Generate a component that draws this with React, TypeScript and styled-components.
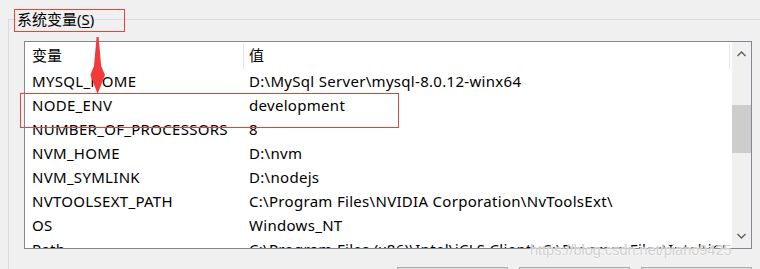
import React from "react";
import styled, { createGlobalStyle } from "styled-components";

const GlobalStyle = createGlobalStyle`
  html, body {
    margin: 0;
    padding: 0;
    background: #f0f0f0;
  }
  body {
    font-family: "Noto Sans", "Noto Sans CJK SC", sans-serif;
    color: #000;
  }
`;

const variables = [
  { name: "MYSQL_HOME", value: "D:\\MySql Server\\mysql-8.0.12-winx64" },
  { name: "NODE_ENV", value: "development" },
  { name: "NUMBER_OF_PROCESSORS", value: "8" },
  { name: "NVM_HOME", value: "D:\\nvm" },
  { name: "NVM_SYMLINK", value: "D:\\nodejs" },
  { name: "NVTOOLSEXT_PATH", value: "C:\\Program Files\\NVIDIA Corporation\\NvToolsExt\\" },
  { name: "OS", value: "Windows_NT" },
  {
    name: "Path",
    value:
      "C:\\Program Files (x86)\\Intel\\iCLS Client\\;C:\\Program Files\\Intel\\iCLS Client\\;C:\\Windows\\system32"
  }
];

const Page = styled.div`
  position: relative;
  width: 760px;
  height: 269px;
  overflow: hidden;
  padding: 8px 0 0 8px;
  box-sizing: border-box;
`;

const GroupBox = styled.fieldset`
  margin: 0;
  padding: 11px 0 0 15px;
  border: 1px solid #dcdcdc;
  border-right: none;
  border-bottom: none;
  min-width: 0;
`;

const Legend = styled.legend`
  margin-left: -8px;
  padding: 0 1px;
  font-size: 15px;
  line-height: 22px;
`;

const Mnemonic = styled.span`
  text-decoration: underline;
  text-underline-offset: 2px;
`;

const ListView = styled.div`
  width: 728px;
  height: 208px;
  box-sizing: border-box;
  border: 1px solid #828790;
  background: #fff;
  display: flex;
  overflow: hidden;
`;

const Table = styled.div`
  flex: 1;
  overflow: hidden;
  font-size: 15px;
  letter-spacing: 0.3px;
`;

const HeaderRow = styled.div`
  display: grid;
  grid-template-columns: 219px 486px;
  height: 27px;
`;

const HeaderCell = styled.div<{ $pad: number }>`
  padding-left: ${({ $pad }) => $pad}px;
  margin-top: 1px;
  border-right: 1px solid #e5e5e5;
  line-height: 25px;
  letter-spacing: 0;
`;

const Row = styled.div`
  display: grid;
  grid-template-columns: 219px 486px;
  height: 24px;
  line-height: 24px;
  white-space: nowrap;
`;

const Cell = styled.div<{ $pad: number }>`
  padding-left: ${({ $pad }) => $pad}px;
  overflow: hidden;
`;

const ScrollBar = styled.div`
  width: 19px;
  background: #f0f0f0;
  display: flex;
  flex-direction: column;
`;

const ArrowButton = styled.div`
  height: 24px;
  display: flex;
  align-items: center;
  justify-content: center;
  color: #606060;
`;

const Track = styled.div`
  flex: 1;
`;

const Thumb = styled.div`
  background: #cdcdcd;
`;

const ButtonRow = styled.div`
  width: 728px;
  display: flex;
  justify-content: flex-end;
  gap: 11px;
  margin-top: 18px;
`;

const DialogButton = styled.div`
  width: 111px;
  height: 23px;
  box-sizing: border-box;
  border: 1px solid #adadad;
  background: #e1e1e1;
`;

const RedBox = styled.div`
  position: absolute;
  box-sizing: border-box;
  border: 1px solid #e8413f;
`;

const LegendMark = styled(RedBox)`
  left: 14px;
  top: 9px;
  width: 111px;
  height: 23px;
`;

const RowMark = styled(RedBox)`
  left: 20px;
  top: 93px;
  width: 379px;
  height: 35px;
`;

const Arrow = styled.svg`
  position: absolute;
  left: 88px;
  top: 36px;
`;

const Watermark = styled.div`
  position: absolute;
  left: 530px;
  top: 242px;
  font-family: "Liberation Sans", Arial, sans-serif;
  font-size: 14.5px;
  color: rgba(190, 190, 190, 0.75);
  text-shadow: 0 0 2px #fff, 0 0 1px #fff;
  white-space: nowrap;
`;

const Chevron: React.FC<{ up?: boolean }> = ({ up }) => (
  <svg width="9" height="6" viewBox="0 0 9 6">
    <path
      d={up ? "M0.5 5 L4.5 1 L8.5 5" : "M0.5 1 L4.5 5 L8.5 1"}
      fill="none"
      stroke="currentColor"
      strokeWidth="1.4"
    />
  </svg>
);

const App: React.FC = () => (
  <>
    <GlobalStyle />
    <Page>
      <GroupBox>
        <Legend>
          系统变量(<Mnemonic>S</Mnemonic>)
        </Legend>
        <ListView>
          <Table>
            <HeaderRow>
              <HeaderCell $pad={7}>变量</HeaderCell>
              <HeaderCell $pad={5}>值</HeaderCell>
            </HeaderRow>
            {variables.map((v) => (
              <Row key={v.name}>
                <Cell $pad={7}>{v.name}</Cell>
                <Cell $pad={5}>{v.value}</Cell>
              </Row>
            ))}
          </Table>
          <ScrollBar>
            <ArrowButton>
              <Chevron up />
            </ArrowButton>
            <Track>
              <Thumb style={{ marginTop: 39, height: 48 }} />
            </Track>
            <ArrowButton>
              <Chevron />
            </ArrowButton>
          </ScrollBar>
        </ListView>
        <ButtonRow>
          <DialogButton />
          <DialogButton />
          <DialogButton />
        </ButtonRow>
      </GroupBox>
      <LegendMark />
      <RowMark />
      <Arrow width="20" height="62" viewBox="0 0 20 62">
        <polygon
          points="8.6,1 10.6,1 13.2,30 17,39 9.6,58 2.4,39 6,30"
          fill="#f23a3a"
        />
      </Arrow>
      <Watermark>https://blog.csdn.net/piano9425</Watermark>
    </Page>
  </>
);

export default App;
